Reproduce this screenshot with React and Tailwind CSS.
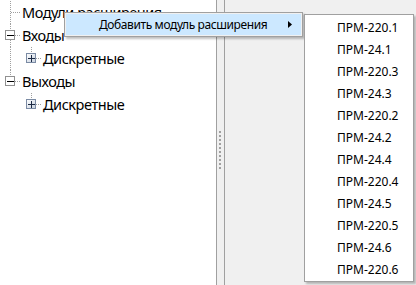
const SUB_ITEMS = [
  'ПРМ-220.1', 'ПРМ-24.1', 'ПРМ-220.3', 'ПРМ-24.3', 'ПРМ-220.2', 'ПРМ-24.2',
  'ПРМ-24.4', 'ПРМ-220.4', 'ПРМ-24.5', 'ПРМ-220.5', 'ПРМ-24.6', 'ПРМ-220.6',
]

const DOT = { stroke: '#a0a0a0', strokeWidth: 1, strokeDasharray: '1 1', shapeRendering: 'crispEdges' }

// one 21px column of tree connectors
function Gutter({ vTop, vBottom, hLine, box }) {
  return (
    <svg width="21" height="23" className="flex-shrink-0 block">
      {vTop && <line x1="10.5" y1="0" x2="10.5" y2={box ? 7 : 12} {...DOT} />}
      {vBottom && <line x1="10.5" y1={box ? 16 : 12} x2="10.5" y2="23" {...DOT} />}
      {hLine && <line x1={box ? 15 : 11} y1="11.5" x2="21" y2="11.5" {...DOT} />}
      {box === 'minus' && (
        <g shapeRendering="crispEdges">
          <rect x="5.5" y="6.5" width="9" height="9" fill="#fff" stroke="#919191" />
          <line x1="7" y1="11" x2="14" y2="11" stroke="#000" />
        </g>
      )}
      {box === 'plus' && (
        <g shapeRendering="crispEdges">
          <defs>
            <linearGradient id="pg" x1="0" y1="0" x2="1" y2="1">
              <stop offset="0" stopColor="#ffffff" />
              <stop offset="1" stopColor="#c6d0de" />
            </linearGradient>
          </defs>
          <rect x="5.5" y="6.5" width="9" height="9" fill="url(#pg)" stroke="#7b8ba4" />
          <line x1="7" y1="11" x2="14" y2="11" stroke="#1c2a44" />
          <line x1="10.5" y1="8" x2="10.5" y2="15" stroke="#1c2a44" />
        </g>
      )}
    </svg>
  )
}

function Row({ cols, label }) {
  return (
    <div className="flex items-center h-[23px]">
      {cols.map((c, i) => c ? <Gutter key={i} {...c} /> : <div key={i} className="w-[21px] flex-shrink-0" />)}
      <span className="pl-[1px] text-[14.5px] tracking-[-0.45px] text-black leading-none whitespace-nowrap">{label}</span>
    </div>
  )
}

export default function App() {
  return (
    <div className="relative w-[416px] h-[285px] overflow-hidden flex bg-[#f0f0f0]" style={{ fontFamily: '"Noto Sans", "Open Sans", sans-serif' }}>
      {/* tree panel */}
      <div className="w-[216px] h-full bg-white pt-[1px]">
        <Row cols={[{ vTop: true, vBottom: true, hLine: true }]} label="Модули расширения" />
        <Row cols={[{ vTop: true, vBottom: true, hLine: true, box: 'minus' }]} label="Входы" />
        <Row cols={[{ vTop: true, vBottom: true }, { vTop: true, hLine: true, box: 'plus' }]} label="Дискретные" />
        <Row cols={[{ vTop: true, hLine: true, box: 'minus' }]} label="Выходы" />
        <Row cols={[null, { vTop: true, hLine: true, box: 'plus' }]} label="Дискретные" />
      </div>

      {/* splitter */}
      <div className="w-[9px] h-full border-x border-[#a0a0a0] bg-[#f0f0f0] flex items-center">
        <div className="mt-[15px] ml-[2px] flex flex-col gap-[2px]">
          {Array.from({ length: 10 }).map((_, i) => (
            <div key={i} className="w-[2px] h-[2px] bg-[#a0a0a0]" />
          ))}
        </div>
      </div>
      <div className="flex-1 h-full bg-[#f0f0f0]" />

      {/* context menu */}
      <div className="absolute left-[64px] top-[12px] w-[239px] h-[25px] bg-[#f0f0f0] border border-[#a0a0a0] shadow-[2px_2px_2px_rgba(0,0,0,0.25)] p-[1px]">
        <div className="h-full bg-[#cce8ff] flex items-center text-[12px] tracking-[-0.4px] text-black pl-[33px] pr-[9px]">
          <span className="flex-1 leading-none">Добавить модуль расширения</span>
          <svg width="4" height="7" viewBox="0 0 4 7"><path d="M0 0L4 3.5L0 7Z" fill="#000" /></svg>
        </div>
      </div>

      {/* submenu */}
      <div className="absolute left-[304px] top-[14px] w-[110px] h-[268px] bg-white border border-[#a0a0a0] shadow-[2px_2px_2px_rgba(0,0,0,0.25)] pt-[2px]">
        {SUB_ITEMS.map(t => (
          <div key={t} className="h-[22px] flex items-center pl-[32px] text-[12px] text-black leading-none">{t}</div>
        ))}
      </div>
    </div>
  )
}
